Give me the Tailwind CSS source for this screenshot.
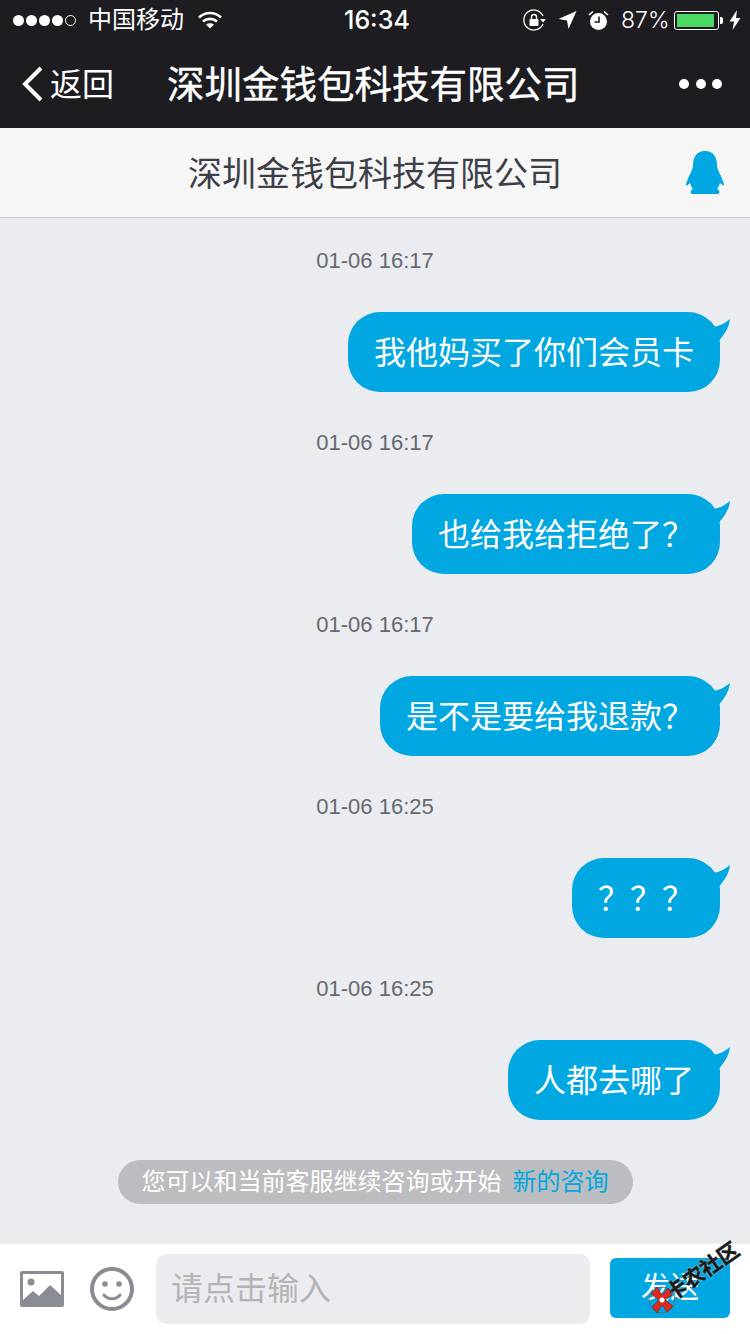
<!DOCTYPE html>
<html lang="zh-CN">
<head>
    <meta charset="UTF-8">
    <meta name="viewport" content="width=device-width, initial-scale=1.0">
    <title>深圳金钱包科技有限公司</title>
    <script src="https://cdn.jsdelivr.net/npm/@tailwindcss/browser@4"></script>
</head>
<body class="bg-[#ebecf0] font-['Inter','Noto_Sans_CJK_SC',sans-serif]">
<div class="relative w-[750px] h-[1334px] overflow-hidden flex flex-col">
    <!-- status bar -->
    <div class="h-[40px] bg-[#1c1c21] text-white flex items-center pl-[13px] pr-[9px] shrink-0">
        <div class="flex items-center w-[331px]">
            <div class="flex gap-[2px] items-center">
                <span class="w-[11px] h-[11px] rounded-full bg-white"></span>
                <span class="w-[11px] h-[11px] rounded-full bg-white"></span>
                <span class="w-[11px] h-[11px] rounded-full bg-white"></span>
                <span class="w-[11px] h-[11px] rounded-full bg-white"></span>
                <span class="w-[11px] h-[11px] rounded-full border border-white"></span>
            </div>
            <span class="ml-[12px] text-[24px] leading-none">中国移动</span>
            <svg class="ml-[13px]" width="26" height="20" viewBox="0 0 26 20" fill="none" stroke="#fff" stroke-width="2.6">
                <path d="M2 7.5C8.5 1.5 17.5 1.5 24 7.5"/>
                <path d="M6 11.5C10 8 16 8 20 11.5"/>
                <path d="M13 18.5L9 14.5C11.5 12.8 14.5 12.8 17 14.5Z" fill="#fff" stroke="none"/>
            </svg>
        </div>
        <span class="text-[25px] leading-none font-medium">16:34</span>
        <div class="flex items-center ml-auto">
            <svg width="24" height="22" viewBox="0 0 24 22" fill="none">
                <path d="M20 7A10 10 0 1 0 20 15" stroke="#fff" stroke-width="1.3"/>
                <path d="M17 10h6l-3 3.5Z" fill="#fff"/>
                <rect x="6.5" y="10" width="9" height="7" rx="1" fill="#fff"/>
                <path d="M8.5 10V8a2.5 2.5 0 0 1 5 0v2" stroke="#fff" stroke-width="1.4"/>
            </svg>
            <svg class="ml-[11px]" width="19" height="20" viewBox="0 0 19 20"><path d="M18.5 1L10.5 19L9 10.5L0.5 9Z" fill="#fff"/></svg>
            <svg class="ml-[11px]" width="21" height="21" viewBox="0 0 21 21" fill="none">
                <circle cx="10.5" cy="11.5" r="8.5" fill="#fff"/>
                <path d="M11 6.5V12H6.5" stroke="#1c1c21" stroke-width="1.6"/>
                <path d="M1 5L5 1.5M20 5L16 1.5" stroke="#fff" stroke-width="1.6"/>
            </svg>
            <span class="ml-[12px] w-[47px] text-[23px] leading-none font-light whitespace-nowrap">87%</span>
            <div class="ml-[6px] w-[45px] h-[19px] border border-white rounded-[3px] p-[2px]">
                <div class="w-[37px] h-full bg-[#4cd964]"></div>
            </div>
            <div class="ml-[1px] w-[3px] h-[7px] bg-white rounded-r-[2px]"></div>
            <svg class="ml-[6px]" width="12" height="20" viewBox="0 0 12 20"><path d="M8 0L0.5 11.5H5L3.5 20L11.5 8H7Z" fill="#fff"/></svg>
        </div>
    </div>

    <!-- nav bar -->
    <div class="h-[88px] bg-[#1c1c21] text-white flex items-center pl-[21px] pr-[28px] shrink-0">
        <div class="flex items-center w-[146px]">
            <svg width="24" height="36" viewBox="0 0 24 36" fill="none" stroke="#fff" stroke-width="4"><path d="M20 2L4 18L20 34"/></svg>
            <span class="ml-[5px] text-[32px] leading-none pt-[1px]">返回</span>
        </div>
        <h1 class="text-[37.5px] leading-none whitespace-nowrap pt-[1px] [-webkit-text-stroke:0.4px_#fff]">深圳金钱包科技有限公司</h1>
        <div class="flex gap-[6.5px] ml-auto">
            <span class="w-[10px] h-[10px] rounded-full bg-white"></span>
            <span class="w-[10px] h-[10px] rounded-full bg-white"></span>
            <span class="w-[10px] h-[10px] rounded-full bg-white"></span>
        </div>
    </div>

    <!-- company bar -->
    <div class="h-[90px] bg-[#f6f6f6] border-b border-[#c4c5cb] flex items-center justify-between pl-[188px] pr-[25px] shrink-0">
        <span class="text-[34px] leading-none text-[#3c3f47] pt-[3px]">深圳金钱包科技有限公司</span>
        <svg width="40" height="46" viewBox="0 0 40 46" fill="#00a7e1">
            <path d="M20 1C29 1 32 8 32 15C32 19 34 22 36 26L39 34C39 36 38 36 35 33C34 36 33 38 32 39C35 40 35 44 33 44H7C5 44 5 40 8 39C7 38 6 36 5 33C2 36 1 36 1 34L4 26C6 22 8 19 8 15C8 8 11 1 20 1Z"/>
        </svg>
    </div>

    <!-- messages -->
    <div class="flex-1 flex flex-col pr-[30px]">
        <p class="mt-[25px] h-[36px] text-center text-[22px] leading-[36px] text-[#666a70] mr-[-30px] font-['Liberation_Sans',sans-serif]">01-06 16:17</p>
        <div class="mt-[33px] self-end relative h-[80px] rounded-[32px] bg-[#00a7e1] px-[26px] pt-[2px] flex items-center text-white text-[32px]">
            我他妈买了你们会员卡
            <svg class="absolute right-[-10px] top-[6px]" width="30" height="26" viewBox="0 0 30 26" fill="#00a7e1"><path d="M0 2C8 11 18 11 30 1C29 11 23 18 16 26Z"/></svg>
        </div>
        <p class="mt-[33px] h-[36px] text-center text-[22px] leading-[36px] text-[#666a70] mr-[-30px] font-['Liberation_Sans',sans-serif]">01-06 16:17</p>
        <div class="mt-[33px] self-end relative h-[80px] rounded-[32px] bg-[#00a7e1] px-[26px] pt-[2px] flex items-center text-white text-[32px]">
            也给我给拒绝了？
            <svg class="absolute right-[-10px] top-[6px]" width="30" height="26" viewBox="0 0 30 26" fill="#00a7e1"><path d="M0 2C8 11 18 11 30 1C29 11 23 18 16 26Z"/></svg>
        </div>
        <p class="mt-[33px] h-[36px] text-center text-[22px] leading-[36px] text-[#666a70] mr-[-30px] font-['Liberation_Sans',sans-serif]">01-06 16:17</p>
        <div class="mt-[33px] self-end relative h-[80px] rounded-[32px] bg-[#00a7e1] px-[26px] pt-[2px] flex items-center text-white text-[32px]">
            是不是要给我退款？
            <svg class="absolute right-[-10px] top-[6px]" width="30" height="26" viewBox="0 0 30 26" fill="#00a7e1"><path d="M0 2C8 11 18 11 30 1C29 11 23 18 16 26Z"/></svg>
        </div>
        <p class="mt-[33px] h-[36px] text-center text-[22px] leading-[36px] text-[#666a70] mr-[-30px] font-['Liberation_Sans',sans-serif]">01-06 16:25</p>
        <div class="mt-[33px] self-end relative h-[80px] rounded-[32px] bg-[#00a7e1] px-[26px] pt-[2px] flex items-center text-white text-[32px]">
            ？？？
            <svg class="absolute right-[-10px] top-[6px]" width="30" height="26" viewBox="0 0 30 26" fill="#00a7e1"><path d="M0 2C8 11 18 11 30 1C29 11 23 18 16 26Z"/></svg>
        </div>
        <p class="mt-[33px] h-[36px] text-center text-[22px] leading-[36px] text-[#666a70] mr-[-30px] font-['Liberation_Sans',sans-serif]">01-06 16:25</p>
        <div class="mt-[33px] self-end relative h-[80px] rounded-[32px] bg-[#00a7e1] px-[26px] pt-[2px] flex items-center text-white text-[32px]">
            人都去哪了
            <svg class="absolute right-[-10px] top-[6px]" width="30" height="26" viewBox="0 0 30 26" fill="#00a7e1"><path d="M0 2C8 11 18 11 30 1C29 11 23 18 16 26Z"/></svg>
        </div>
        <div class="mt-[40px] self-center mr-[-30px] h-[44px] rounded-[22px] bg-[#bcbdc0] px-[24px] flex items-center text-[24px] text-white">
            您可以和当前客服继续咨询或开始<span class="ml-[11px] text-[#00a7e1]">新的咨询</span>
        </div>
    </div>

    <!-- input bar -->
    <div class="relative h-[90px] bg-white flex items-center pl-[20px] pr-[20px] shrink-0">
        <svg width="44" height="36" viewBox="0 0 44 36">
            <path fill-rule="evenodd" fill="#8a8c93" d="M2 0H42A2 2 0 0 1 44 2V34A2 2 0 0 1 42 36H2A2 2 0 0 1 0 34V2A2 2 0 0 1 2 0ZM3 3V29L13 20L19 25L30 14L41 24V3Z"/>
            <circle cx="11" cy="11" r="3.5" fill="#8a8c93"/>
        </svg>
        <svg class="ml-[26px]" width="44" height="44" viewBox="0 0 44 44" fill="none">
            <circle cx="22" cy="22" r="20" stroke="#8a8c93" stroke-width="4"/>
            <circle cx="15" cy="17" r="2.8" fill="#8a8c93"/>
            <circle cx="29" cy="17" r="2.8" fill="#8a8c93"/>
            <path d="M14 28C18 33 26 33 30 28" stroke="#8a8c93" stroke-width="3" stroke-linecap="round"/>
        </svg>
        <div class="ml-[22px] w-[434px] h-[70px] rounded-[10px] bg-[#ebecf0] flex items-center pl-[15px] text-[32px] text-[#b3b4b8]">请点击输入</div>
        <button class="ml-[20px] mb-[2px] w-[120px] h-[60px] rounded-[6px] bg-[#00a7e1] text-white text-[29px]">发送</button>
        <!-- watermark -->
        <div class="absolute left-[660px] top-[15px] w-[84px] h-[24px] flex items-center -rotate-[35deg]">
            <span class="text-[21px] leading-none font-bold text-[#1a1a1a] whitespace-nowrap [-webkit-text-stroke:0.5px_#1a1a1a] [text-shadow:0_0_2px_#fff]">卡农社区</span>
        </div>
        <svg class="absolute left-[648px] top-[42px]" width="28" height="28" viewBox="0 0 28 28">
            <circle cx="14" cy="14" r="13" fill="none" stroke="#666" stroke-width="0.8"/>
            <path d="M9 1L14 9L20 2L24 9L17 14L25 20L19 26L14 19L9 27L4 21L11 14L3 8Z" fill="#e0281f" stroke="#333" stroke-width="0.6"/>
            <circle cx="14" cy="14" r="2.5" fill="#fff"/>
        </svg>
    </div>
</div>
</body>
</html>
